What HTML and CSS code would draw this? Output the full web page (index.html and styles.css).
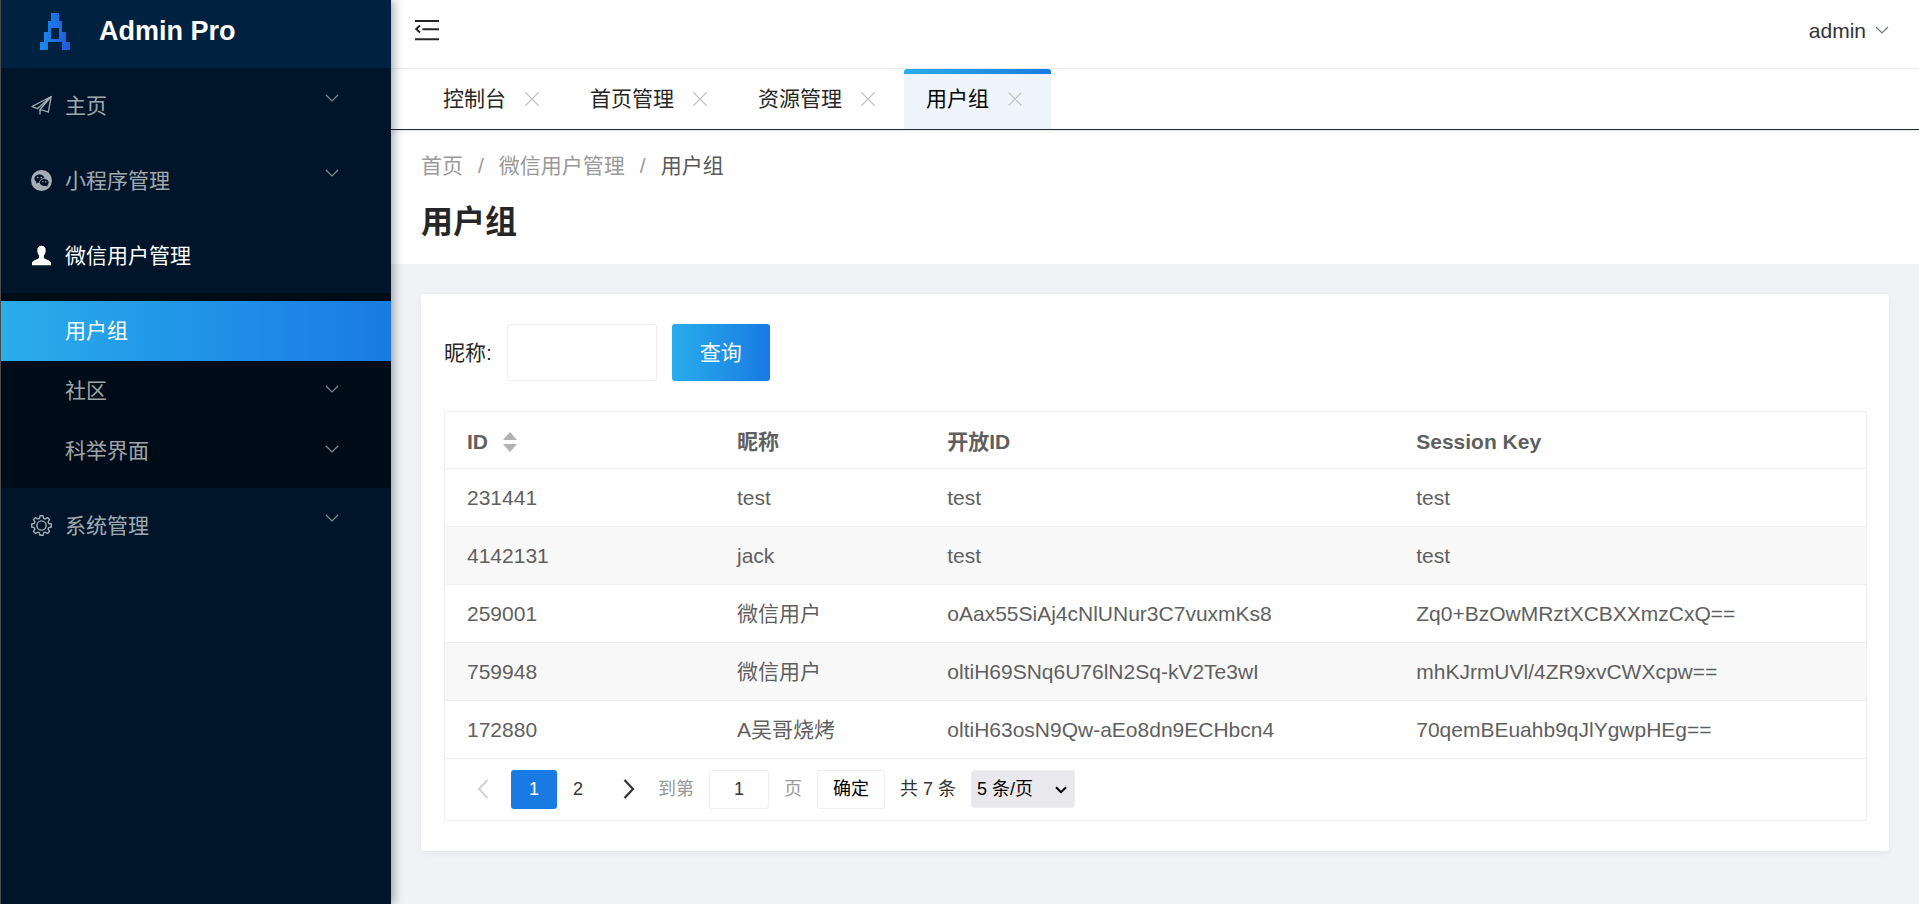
FILE: index.html
```html
<!DOCTYPE html>
<html lang="zh-CN">
<head>
<meta charset="utf-8">
<title>用户组 - Admin Pro</title>
<link rel="stylesheet" href="styles.css">
</head>
<body>
<svg class="sprite" aria-hidden="true">
  <symbol id="chevron" viewBox="0 0 14 8"><path d="M1 1l6 6 6-6" fill="none" stroke="currentColor" stroke-width="1.2"/></symbol>
  <symbol id="close" viewBox="0 0 14 14"><path d="M0.5 0.5l13 13M13.5 0.5l-13 13" fill="none" stroke="currentColor" stroke-width="1.2"/></symbol>
</svg>
<aside class="sidebar">
  <div class="brand">
    <svg class="brand-logo" viewBox="0 0 30 37" aria-hidden="true">
      <defs><linearGradient id="lg" x1="0" x2="1" y1="0" y2="0"><stop offset="0.1" stop-color="#1a86e8"/><stop offset="1" stop-color="#2259e0"/></linearGradient></defs>
      <path fill="url(#lg)" fill-rule="evenodd" d="M11 0h8v8h3v11h4v10h4v8h-8v-8H8v8H0v-8h4V19h4V8h3zM11 15v11h8V15z"/>
    </svg>
    <span class="brand-name">Admin Pro</span>
  </div>
  <nav>
    <ul class="menu">
      <li><a class="menu-item" href="#">
        <svg class="menu-icon" viewBox="0 0 21 21" fill="none" stroke="currentColor" stroke-width="1.3" stroke-linejoin="round" aria-hidden="true"><path d="M20.200 1.500L1 11.500l5.300 2.200L20.200 1.500l-2.900 15.700-6-2.200M20.200 1.500L9 14.500v5M9 14.500l2.500.8"/></svg>
        <span class="menu-text">主页</span><svg class="menu-arrow"><use href="#chevron"/></svg></a></li>
      <li><a class="menu-item" href="#">
        <svg class="menu-icon" viewBox="0 0 21 21" aria-hidden="true"><circle cx="10.500" cy="10.500" r="10.500" fill="currentColor"/><path fill="#001529" d="M8.500 4.600c2.600 0 4.600 1.500 5 3.600-3 0-5.200 1.800-5.200 4.200l.1.500-1.700-.2-1.800 1 .5-1.600C4.200 11.200 3.500 10.100 3.500 8.800c0-2.400 2.200-4.200 5-4.200zM13.300 9c2.500 0 4.400 1.600 4.400 3.600 0 1.100-.6 2.100-1.500 2.800l.4 1.300-1.500-.8c-3.300.8-6.200-.9-6.200-3.300 0-2 1.900-3.600 4.400-3.600z"/><g fill="currentColor"><circle cx="6.800" cy="7.600" r=".8"/><circle cx="10.200" cy="7.600" r=".8"/><circle cx="11.900" cy="11.700" r=".7"/><circle cx="14.800" cy="11.700" r=".7"/></g></svg>
        <span class="menu-text">小程序管理</span><svg class="menu-arrow"><use href="#chevron"/></svg></a></li>
      <li><a class="menu-item is-open" href="#">
        <svg class="menu-icon" viewBox="0 0 21 21" fill="currentColor" aria-hidden="true"><path d="M10.500.8c2.700 0 4.400 1.900 4.200 4.900-.1 2-.8 3.800-1.800 4.900v2.300c.4 1 6.300 1.900 7.100 4.600v2.700H1v-2.700c.8-2.700 6.700-3.600 7.100-4.600v-2.300c-1-1.100-1.700-2.900-1.800-4.900C6.100 2.700 7.800.8 10.500.8z"/></svg>
        <span class="menu-text">微信用户管理</span></a>
        <ul class="submenu">
          <li><a class="submenu-item is-active" href="#"><span class="menu-text">用户组</span></a></li>
          <li><a class="submenu-item" href="#"><span class="menu-text">社区</span><svg class="menu-arrow"><use href="#chevron"/></svg></a></li>
          <li><a class="submenu-item" href="#"><span class="menu-text">科举界面</span><svg class="menu-arrow"><use href="#chevron"/></svg></a></li>
        </ul></li>
      <li><a class="menu-item" href="#">
        <svg class="menu-icon" viewBox="0 0 21 21" fill="none" stroke="currentColor" stroke-width="1.4" stroke-linejoin="round" aria-hidden="true"><path d="M9 .8h3l.6 2.500 1.600.7 2.200-1.400 2.100 2.100L17.100 6.900l.7 1.600 2.500.5v3l-2.500.6-.7 1.600 1.400 2.200-2.100 2.100-2.200-1.400-1.600.7-.6 2.500H9l-.6-2.500-1.600-.7-2.200 1.400-2.100-2.100 1.400-2.200-.7-1.600L.7 12V9l2.500-.5.7-1.600-1.400-2.200 2.100-2.100L6.800 4l1.600-.7z"/><circle cx="10.500" cy="10.500" r="4.600"/></svg>
        <span class="menu-text">系统管理</span><svg class="menu-arrow"><use href="#chevron"/></svg></a></li>
    </ul>
  </nav>
</aside>
<div class="main">
  <header class="topbar">
    <button class="icon-btn" type="button" aria-label="折叠菜单"><svg class="fold-icon" viewBox="0 0 24 22" fill="none" stroke="currentColor" stroke-width="2"><path d="M0 2h24M7.500 10.200H24M0 20.200h24"/><path d="M5 6.500L1.200 10 5 13.500"/></svg></button>
    <button class="user" type="button">admin<svg class="user-arrow"><use href="#chevron"/></svg></button>
  </header>
  <nav class="tabs">
    <div class="tab"><a href="#">控制台</a><button class="tab-close" type="button" aria-label="关闭"><svg><use href="#close"/></svg></button></div>
    <div class="tab"><a href="#">首页管理</a><button class="tab-close" type="button" aria-label="关闭"><svg><use href="#close"/></svg></button></div>
    <div class="tab"><a href="#">资源管理</a><button class="tab-close" type="button" aria-label="关闭"><svg><use href="#close"/></svg></button></div>
    <div class="tab tab-active"><a href="#">用户组</a><button class="tab-close" type="button" aria-label="关闭"><svg><use href="#close"/></svg></button></div>
  </nav>
  <div class="page-head">
    <nav class="crumbs"><a href="#">首页</a><span>/</span><a href="#">微信用户管理</a><span>/</span><span class="crumb-now">用户组</span></nav>
    <h1 class="page-title">用户组</h1>
  </div>
  <main class="card">
    <form class="search">
      <label for="nick">昵称:</label>
      <input class="search-input" id="nick" type="text">
      <button class="search-btn" type="button">查询</button>
    </form>
    <div class="table-box">
      <table class="table">
        <colgroup><col class="col-id"><col class="col-nick"><col class="col-open"><col></colgroup>
        <thead><tr>
          <th><span class="sortable">ID<svg class="sort-icon" viewBox="0 0 14 22" fill="#b2b2b2" aria-hidden="true"><path d="M0 9l7-8 7 8zM0 13h14l-7 8z"/></svg></span></th><th>昵称</th><th>开放ID</th><th>Session Key</th></tr></thead>
        <tbody>
          <tr><td>231441</td><td>test</td><td>test</td><td>test</td></tr>
          <tr><td>4142131</td><td>jack</td><td>test</td><td>test</td></tr>
          <tr><td>259001</td><td>微信用户</td><td>oAax55SiAj4cNlUNur3C7vuxmKs8</td><td>Zq0+BzOwMRztXCBXXmzCxQ==</td></tr>
          <tr><td>759948</td><td>微信用户</td><td>oltiH69SNq6U76lN2Sq-kV2Te3wI</td><td>mhKJrmUVl/4ZR9xvCWXcpw==</td></tr>
          <tr><td>172880</td><td>A吴哥烧烤</td><td>oltiH63osN9Qw-aEo8dn9ECHbcn4</td><td>70qemBEuahb9qJlYgwpHEg==</td></tr>
        </tbody>
      </table>
      <div class="pager">
        <button class="page-step" type="button" disabled aria-label="上一页"><svg viewBox="0 0 12 20" fill="none" stroke="currentColor" stroke-width="2"><path d="M10.500 1L2 10l8.500 9"/></svg></button>
        <span class="page-num page-now" aria-current="page">1</span>
        <a class="page-num" href="#">2</a>
        <button class="page-step" type="button" aria-label="下一页"><svg viewBox="0 0 12 20" fill="none" stroke="currentColor" stroke-width="2.200"><path d="M1.500 1L10 10l-8.500 9"/></svg></button>
        <label class="page-hint" for="goto">到第</label>
        <input class="page-input" id="goto" type="text" value="1">
        <span class="page-hint">页</span>
        <button class="page-ok" type="button">确定</button>
        <span class="page-total">共 7 条</span>
        <span class="page-size"><select aria-label="每页条数"><option>5 条/页</option><option>10 条/页</option></select><svg viewBox="0 0 12 8" fill="none" stroke="#000" stroke-width="2"><path d="M1 1.200l5 5 5-5"/></svg></span>
      </div>
    </div>
  </main>
</div>
</body>
</html>
```
FILE: styles.css
```css
* { box-sizing: border-box; }
body {
  margin: 0;
  min-height: 100vh;
  display: flex;
  background: #f0f2f5;
  color: #262626;
  font: 21px/32px "Liberation Sans", "Noto Sans CJK SC", sans-serif;
}
a { color: inherit; text-decoration: none; }
ul { list-style: none; margin: 0; padding: 0; }
button, input, select { font: inherit; color: inherit; margin: 0; }
button { background: none; border: 0; padding: 0; cursor: pointer; }
svg { display: block; }
.sprite { position: absolute; width: 0; height: 0; }

.sidebar {
  position: relative;
  z-index: 2;
  flex: none;
  width: 391px;
  background: #001529;
  border-left: 1px solid #4b4b4b;
  box-shadow: 3px 0 9px rgba(0, 21, 41, 0.35);
}
.brand {
  display: flex;
  align-items: center;
  gap: 29px;
  height: 68px;
  padding: 0 39px 6px;
  background: #002140;
}
.brand-logo { width: 30px; height: 37px; }
.brand-name { color: #fff; font-size: 27px; font-weight: bold; }
.menu-item, .submenu-item {
  display: flex;
  align-items: center;
  padding: 0 52px 0 30px;
  color: rgba(255, 255, 255, 0.65);
}
.menu-item { height: 75px; gap: 13px; }
.menu-icon { width: 21px; height: 21px; }
.menu-text { flex: 1; }
.menu-arrow { width: 14px; height: 8px; opacity: 0.8; }
.menu-item .menu-arrow { margin-bottom: 16px; }
.submenu-item .menu-arrow { margin-bottom: 4px; }
.is-open, .is-active { color: #fff; }
.submenu { padding: 8px 0 7px; background: #000c17; border-radius: 3px; }
.submenu-item { height: 60px; padding-left: 64px; }
.is-active { background: linear-gradient(to right, #29adeb, #197ae4); }

.main { flex: 1; min-width: 0; }
.topbar {
  display: flex;
  align-items: center;
  justify-content: space-between;
  height: 69px;
  padding: 0 30px 8px 24px;
  background: #fff;
  border-bottom: 1px solid #f2f2f2;
}
.fold-icon { width: 24px; height: 22px; }
.user { display: flex; align-items: center; gap: 9px; padding-top: 2px; color: #333; }
.user-arrow { width: 14px; height: 8px; margin-bottom: 3px; color: #6b7480; }
.tabs {
  position: relative;
  display: flex;
  height: 61px;
  padding-left: 30px;
  background: #fff;
  border-bottom: 1px solid #20252b;
  box-shadow: 0 1px 4px rgba(0, 21, 41, 0.12);
}
.tab {
  display: flex;
  align-items: center;
  gap: 19px;
  padding: 0 29px 0 22px;
}
.tab-close { color: #c2c2c2; }
.tab-close svg { width: 14px; height: 14px; }
.tab-active {
  color: #000;
  border-radius: 3px 3px 0 0;
  background: linear-gradient(to right, #29adeb, #197ae4) top / 100% 5px no-repeat #f0f4fc;
}
.page-head { padding: 20px 30px 22px; background: #fff; }
.crumbs { display: flex; gap: 15px; color: #999; }
.crumb-now { color: #595959; }
.page-title { margin: 20px 0 0; font-size: 32px; line-height: 40px; }

.card {
  margin: 30px;
  padding: 30px 22px 30px 23px;
  background: #fff;
  border-radius: 3px;
  box-shadow: 0 2px 6px rgba(0, 0, 0, 0.06);
}
.search { display: flex; align-items: center; gap: 15px; margin-bottom: 30px; }
.search-input {
  width: 150px;
  height: 57px;
  padding: 0 15px;
  border: 1px solid #eee;
  border-radius: 3px;
}
.search-btn {
  height: 57px;
  padding: 0 28px;
  color: #fff;
  border-radius: 3px;
  background: linear-gradient(to right, #29adeb, #197ae4);
}
.table-box { border: 1px solid #eee; color: #5f5f5f; }
.table { width: 100%; table-layout: fixed; border-collapse: collapse; }
.col-id { width: 19%; }
.col-nick { width: 14.8%; }
.col-open { width: 33%; }
.table th, .table td {
  height: 58px;
  padding: 2px 22px 0;
  text-align: left;
  border-bottom: 1px solid #eee;
}
.table th { height: 56px; padding-top: 4px; }
.table tbody tr:nth-child(even) { background: #f8f8f8; }
.sortable { display: flex; align-items: center; gap: 15px; }
.sort-icon { width: 14px; height: 22px; }

.pager {
  display: flex;
  align-items: center;
  height: 61px;
  padding-left: 20px;
  color: #333;
  font-size: 18px;
}
.page-step { display: grid; place-items: center; width: 36px; height: 39px; }
.page-step svg { width: 12px; height: 20px; }
.page-step:disabled { color: #d2d2d2; }
.page-num {
  width: 46px;
  line-height: 39px;
  text-align: center;
  border-radius: 3px;
}
.page-now { margin-left: 10px; color: #fff; background: #197ae4; }
.page-now + .page-num { width: 42px; }
.page-num + .page-step { margin: 0 11px 0 12px; }
.page-hint { color: #999; }
.page-input {
  width: 60px;
  height: 39px;
  margin: 0 15px;
  padding: 0;
  text-align: center;
  border: 1px solid #eee;
  border-radius: 3px;
}
.page-ok {
  height: 39px;
  margin: 0 15px;
  padding: 0 15px;
  color: #000;
  border: 1px solid #eee;
  border-radius: 3px;
}
.page-size { position: relative; margin-left: 15px; }
.page-size select {
  display: block;
  appearance: none;
  width: 104px;
  height: 38px;
  padding: 0 5px;
  color: #000;
  background: #e9e9ed;
  border: 1px solid #eee;
  border-radius: 3px;
}
.page-size svg { position: absolute; right: 8px; top: 16px; width: 12px; height: 8px; pointer-events: none; }
```
